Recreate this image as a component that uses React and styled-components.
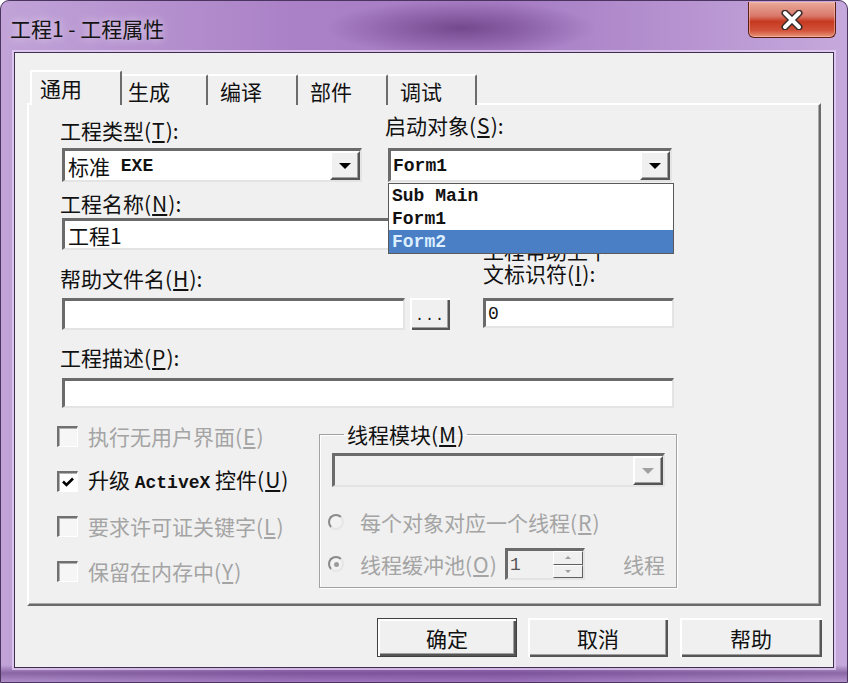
import React from "react";
import styled, { createGlobalStyle } from "styled-components";

const CJK = `"Noto Sans CJK SC", "Noto Sans", sans-serif`;
const MONO = `"Liberation Mono", "DejaVu Sans Mono", monospace`;

const GlobalStyle = createGlobalStyle`
  html, body { margin: 0; padding: 0; background: #ffffff; overflow: hidden; }
  body { font-family: ${CJK}; }
  * { box-sizing: border-box; }
`;

const Window = styled.div`
  width: 848px;
  height: 683px;
  display: flex;
  flex-direction: column;
  padding: 0 13px 14px 13px;
  border: 1px solid #4b3560;
  border-radius: 9px 9px 0 0;
  background:
    radial-gradient(ellipse 135px 28px at 460px 27px, rgba(75, 30, 95, 0.55), rgba(75, 30, 95, 0) 100%),
    linear-gradient(180deg, rgba(0, 0, 0, 0) 664px, rgba(90, 50, 120, 0.55) 672px, rgba(150, 110, 190, 0.2) 683px),
    linear-gradient(90deg, #c1a3d8 0%, #aa80c6 35%, #a67cc4 60%, #c6a9dc 100%);
`;

const TitleBar = styled.div`
  height: 51px;
  flex: none;
  margin: 0 -13px;
  padding: 0 11px 0 9px;
  display: flex;
  justify-content: space-between;
  align-items: flex-start;
`;

const TitleText = styled.div`
  margin-top: 14px;
  font-size: 21px;
  line-height: 26px;
  color: #141414;
  text-shadow: 0 0 8px rgba(255, 255, 255, 0.75);
`;

const CloseButton = styled.div`
  width: 88px;
  height: 36px;
  margin-top: 1px;
  display: flex;
  align-items: center;
  justify-content: center;
  border: 1px solid #5c1d16;
  border-top: none;
  border-radius: 0 0 6px 6px;
  background: linear-gradient(180deg, #e9aa9a 0%, #d9786a 40%, #c5391f 56%, #d2533a 82%, #e7977a 100%);
  box-shadow: inset 0 0 0 1px rgba(255, 200, 190, 0.5);
`;

const Client = styled.div`
  flex: 1;
  display: flex;
  flex-direction: column;
  background: #f0f0f0;
  border: 1px solid #3f2e50;
  box-shadow: 0 0 0 2px rgba(232, 214, 246, 0.7);
  padding: 17px 12px 0 12px;
`;

const TabStrip = styled.div`
  height: 35px;
  flex: none;
  display: flex;
  align-items: flex-end;
  padding-left: 3px;
  margin-bottom: -2px;
  position: relative;
  z-index: 1;
`;

const Tab = styled.div`
  width: ${(p) => p.$w}px;
  height: ${(p) => (p.$active ? 35 : 31)}px;
  margin-left: ${(p) => p.$ml || 0}px;
  padding: ${(p) => (p.$active ? 3 : 2)}px 0 0 ${(p) => p.$pl}px;
  font-size: 21px;
  line-height: 26px;
  color: #111;
  background: #f0f0f0;
  border-top: 2px solid #ffffff;
  border-left: ${(p) => (p.$active ? "2px solid #ffffff" : "none")};
  border-right: 2px solid #6c6c6c;
  border-radius: 2px 2px 0 0;
  position: relative;
  z-index: ${(p) => (p.$active ? 2 : 1)};
`;

const Panel = styled.div`
  height: 503px;
  flex: none;
  border: 2px solid;
  border-color: #ffffff #6a6a6a #6a6a6a #ffffff;
  box-shadow: inset -1px -1px 0 #a8a8a8;
  padding: 7px 0 0 31px;
  display: flex;
  flex-direction: column;
`;

const Row = styled.div`
  display: flex;
  align-items: ${(p) => p.$align || "stretch"};
  margin-top: ${(p) => p.$mt || 0}px;
`;

const Field = styled.div`
  width: ${(p) => p.$w}px;
  margin-left: ${(p) => p.$ml || 0}px;
  display: flex;
  flex-direction: column;
  justify-content: ${(p) => p.$justify || "flex-start"};
  position: relative;
`;

const Label = styled.div`
  font-size: 21px;
  line-height: ${(p) => p.$lh || 26}px;
  color: ${(p) => (p.$disabled ? "#a4a4a4" : "#111")};
  white-space: nowrap;
  margin: ${(p) => p.$mt || 0}px 0 ${(p) => p.$mb || 0}px ${(p) => p.$ml || 0}px;
`;

const Key = styled.span`
  text-decoration: underline;
  text-underline-offset: 2px;
  margin: 0 1px;
`;

const Mono = styled.span`
  font-family: ${MONO};
  font-size: 18px;
  font-weight: ${(p) => (p.$light ? "normal" : "bold")};
  color: ${(p) => p.$color || "inherit"};
`;

const Sunken = styled.div`
  width: ${(p) => (p.$w ? `${p.$w}px` : "auto")};
  height: ${(p) => p.$h}px;
  margin: ${(p) => p.$mt || 0}px 0 ${(p) => p.$mb || 0}px ${(p) => p.$ml || 0}px;
  display: flex;
  align-items: stretch;
  background: ${(p) => (p.$disabled ? "#f0f0f0" : "#ffffff")};
  border-style: solid;
  border-width: 3px 2px 2px 3px;
  border-color: #6b6b6b #e4e4e4 #e4e4e4 #6b6b6b;
`;

const BoxText = styled.div`
  flex: 1;
  display: flex;
  align-items: center;
  padding-left: ${(p) => p.$pl || 3}px;
  font-size: 21px;
  color: #111;
  white-space: nowrap;
  overflow: hidden;
`;

const DropButton = styled.div`
  width: 30px;
  flex: none;
  display: flex;
  align-items: center;
  justify-content: center;
  background: #f0f0f0;
  border: 2px solid;
  border-color: #ffffff #555555 #555555 #ffffff;
  box-shadow: inset -1px -1px 0 #a0a0a0;
`;

const Arrow = styled.div`
  width: 0;
  height: 0;
  border-left: ${(p) => p.$s || 6}px solid transparent;
  border-right: ${(p) => p.$s || 6}px solid transparent;
  border-top: ${(p) => p.$s || 6}px solid ${(p) => (p.$disabled ? "#a0a0a0" : "#000")};
  transform: ${(p) => (p.$up ? "rotate(180deg)" : "none")};
`;

const DropList = styled.div`
  position: absolute;
  top: 71px;
  left: 0;
  width: 286px;
  z-index: 5;
  background: #ffffff;
  border: 1px solid #5a5a5a;
`;

const DropItem = styled.div`
  height: 23px;
  display: flex;
  align-items: center;
  padding-left: 3px;
  font-family: ${MONO};
  font-size: 18px;
  font-weight: bold;
  white-space: pre;
  color: ${(p) => (p.$selected ? "#dcefff" : "#111")};
  background: ${(p) => (p.$selected ? "#4a7fc6" : "transparent")};
`;

const RaisedButton = styled.div`
  width: ${(p) => p.$w}px;
  height: ${(p) => p.$h}px;
  margin-left: ${(p) => p.$ml || 0}px;
  display: flex;
  align-items: ${(p) => p.$items || "center"};
  justify-content: center;
  font-size: 21px;
  color: #111;
  background: #f0f0f0;
  border: ${(p) => (p.$default ? 1 : 0)}px solid #404040;
  box-shadow: inset 2px 2px 0 #ffffff, inset -2px -2px 0 #555555, inset -3px -3px 0 #a0a0a0;
`;

const Dots = styled.span`
  font-family: ${MONO};
  font-size: 15px;
  line-height: 15px;
  letter-spacing: 1px;
  margin-bottom: 6px;
`;

const CheckList = styled.div`
  width: 262px;
  margin-left: -3px;
  padding-top: 3px;
  display: flex;
  flex-direction: column;
  gap: 21px;
`;

const CheckRow = styled.div`
  height: 24px;
  display: flex;
  align-items: center;
  gap: 10px;
`;

const CheckBox = styled.div`
  width: 21px;
  height: 21px;
  flex: none;
  display: flex;
  align-items: center;
  justify-content: center;
  background: ${(p) => (p.$checked ? "#ffffff" : "#f6f6f6")};
  border-style: solid;
  border-width: 2px 1px 1px 2px;
  border-color: #707070 #ffffff #ffffff #707070;
  box-shadow: inset 1px 1px 0 #b0b0b0;
`;

const GroupBox = styled.fieldset`
  width: 358px;
  margin: 0;
  padding: 0 11px 7px 12px;
  border: 1px solid #a2a2a2;
  box-shadow: 1px 1px 0 #ffffff, inset 1px 1px 0 #ffffff;
  display: flex;
  flex-direction: column;
`;

const Legend = styled.legend`
  margin-left: 12px;
  padding: 0 3px;
  font-size: 21px;
  line-height: 26px;
  color: #111;
`;

const RadioRow = styled.div`
  height: ${(p) => p.$h || 26}px;
  margin-top: ${(p) => p.$mt}px;
  display: flex;
  align-items: center;
`;

const Radio = styled.div`
  width: 16px;
  height: 16px;
  flex: none;
  margin: 0 16px 0 -4px;
  border-radius: 50%;
  display: flex;
  align-items: center;
  justify-content: center;
  background: #f2f2f2;
  border: 2px solid;
  border-color: #8a8a8a #e6e6e6 #e6e6e6 #8a8a8a;

  &::after {
    content: "";
    width: 5px;
    height: 5px;
    border-radius: 50%;
    background: ${(p) => (p.$checked ? "#9c9c9c" : "transparent")};
  }
`;

const SpinButtons = styled.div`
  width: 30px;
  flex: none;
  display: flex;
  flex-direction: column;
`;

const SpinHalf = styled.div`
  flex: 1;
  display: flex;
  align-items: center;
  justify-content: center;
  background: #f0f0f0;
  border: 1px solid;
  border-color: #ffffff #606060 #606060 #ffffff;
`;

const ButtonRow = styled.div`
  display: flex;
  justify-content: flex-end;
  margin: 12px -1px 0 0;
`;

const Hot = ({ k }) => (
  <>
    (<Key>{k}</Key>)
  </>
);

const tabs = [
  { name: "通用", w: 92, pl: 8, active: true },
  { name: "生成", w: 88, pl: 8, ml: -2 },
  { name: "编译", w: 90, pl: 12 },
  { name: "部件", w: 90, pl: 12 },
  { name: "调试", w: 89, pl: 12 },
];

const checks = [
  { text: "执行无用户界面", k: "E", disabled: true },
  { text: "升级 ", mono: "ActiveX", rest: " 控件", k: "U", checked: true },
  { text: "要求许可证关键字", k: "L", disabled: true },
  { text: "保留在内存中", k: "Y", disabled: true },
];

export default function App() {
  return (
    <>
      <GlobalStyle />
      <Window>
        <TitleBar>
          <TitleText>工程1 - 工程属性</TitleText>
          <CloseButton>
            <svg width="24" height="20" viewBox="0 0 24 20">
              <path d="M5 3 L19 17 M19 3 L5 17" stroke="#3a2a2a" strokeWidth="7" strokeLinecap="round" />
              <path d="M5 3 L19 17 M19 3 L5 17" stroke="#ffffff" strokeWidth="4" strokeLinecap="round" />
            </svg>
          </CloseButton>
        </TitleBar>

        <Client>
          <TabStrip>
            {tabs.map((t) => (
              <Tab key={t.name} $w={t.w} $pl={t.pl} $ml={t.ml} $active={t.active}>
                {t.name}
              </Tab>
            ))}
          </TabStrip>

          <Panel>
            <Row $align="flex-end">
              <Field $w={302}>
                <Label $mb={5}>工程类型<Hot k="T" />:</Label>
                <Sunken $h={34} $ml={2}>
                  <BoxText>
                    标准 <Mono>&nbsp;EXE</Mono>
                  </BoxText>
                  <DropButton>
                    <Arrow />
                  </DropButton>
                </Sunken>
              </Field>
              <Field $w={286} $ml={26}>
                <Label $mb={10} $ml={-3}>启动对象<Hot k="S" />:</Label>
                <Sunken $h={34} $w={284}>
                  <BoxText $pl={2}>
                    <Mono>Form1</Mono>
                  </BoxText>
                  <DropButton>
                    <Arrow />
                  </DropButton>
                </Sunken>
                <DropList>
                  <DropItem>Sub Main</DropItem>
                  <DropItem>Form1</DropItem>
                  <DropItem $selected>Form2</DropItem>
                </DropList>
              </Field>
            </Row>

            <Row $mt={8}>
              <Field $w={390}>
                <Label>工程名称<Hot k="N" />:</Label>
                <Sunken $h={32} $w={388} $mt={2} $ml={2}>
                  <BoxText>工程1</BoxText>
                </Sunken>
                <Label $mt={15}>帮助文件名<Hot k="H" />:</Label>
                <Row $mt={7}>
                  <Sunken $h={32} $w={343} $ml={2} />
                  <RaisedButton $w={40} $h={32} $ml={5} $items="flex-end">
                    <Dots>...</Dots>
                  </RaisedButton>
                </Row>
              </Field>
              <Field $w={191} $ml={33} $justify="flex-end">
                <Label $lh={23}>
                  工程帮助上下
                  <br />
                  文标识符<Hot k="I" />:
                </Label>
                <Sunken $h={30} $mt={13} $mb={2}>
                  <BoxText $pl={2}>
                    <Mono $light>0</Mono>
                  </BoxText>
                </Sunken>
              </Field>
            </Row>

            <Label $mt={14}>工程描述<Hot k="P" />:</Label>
            <Sunken $h={30} $w={612} $mt={8} $ml={2} />

            <Row $mt={13} $align="flex-start">
              <CheckList>
                {checks.map((c) => (
                  <CheckRow key={c.k}>
                    <CheckBox $checked={c.checked}>
                      {c.checked && (
                        <svg width="14" height="12" viewBox="0 0 14 12">
                          <path d="M2 5.5 L5.5 9 L12 2.5" fill="none" stroke="#000" strokeWidth="2.6" />
                        </svg>
                      )}
                    </CheckBox>
                    <Label $disabled={c.disabled}>
                      {c.text}
                      {c.mono && <Mono>{c.mono}</Mono>}
                      {c.rest}
                      <Hot k={c.k} />
                    </Label>
                  </CheckRow>
                ))}
              </CheckList>

              <GroupBox>
                <Legend>
                  线程模块<Hot k="M" />
                </Legend>
                <Sunken $h={34} $mt={6} $disabled>
                  <BoxText />
                  <DropButton>
                    <Arrow $disabled />
                  </DropButton>
                </Sunken>
                <RadioRow $mt={22}>
                  <Radio />
                  <Label $disabled>
                    每个对象对应一个线程<Hot k="R" />
                  </Label>
                </RadioRow>
                <RadioRow $mt={13} $h={32}>
                  <Radio $checked />
                  <Label $disabled style={{ width: 145 }}>
                    线程缓冲池<Hot k="O" />
                  </Label>
                  <Sunken $h={32} $w={80} $disabled>
                    <BoxText $pl={2}>
                      <Mono $light $color="#555">1</Mono>
                    </BoxText>
                    <SpinButtons>
                      <SpinHalf>
                        <Arrow $s={3} $up $disabled />
                      </SpinHalf>
                      <SpinHalf>
                        <Arrow $s={3} $disabled />
                      </SpinHalf>
                    </SpinButtons>
                  </Sunken>
                  <Label $disabled style={{ marginLeft: "auto" }}>
                    线程
                  </Label>
                </RadioRow>
              </GroupBox>
            </Row>
          </Panel>

          <ButtonRow>
            <RaisedButton $w={140} $h={39} $default>确定</RaisedButton>
            <RaisedButton $w={140} $h={39} $ml={11}>取消</RaisedButton>
            <RaisedButton $w={142} $h={39} $ml={12}>帮助</RaisedButton>
          </ButtonRow>
        </Client>
      </Window>
    </>
  );
}
